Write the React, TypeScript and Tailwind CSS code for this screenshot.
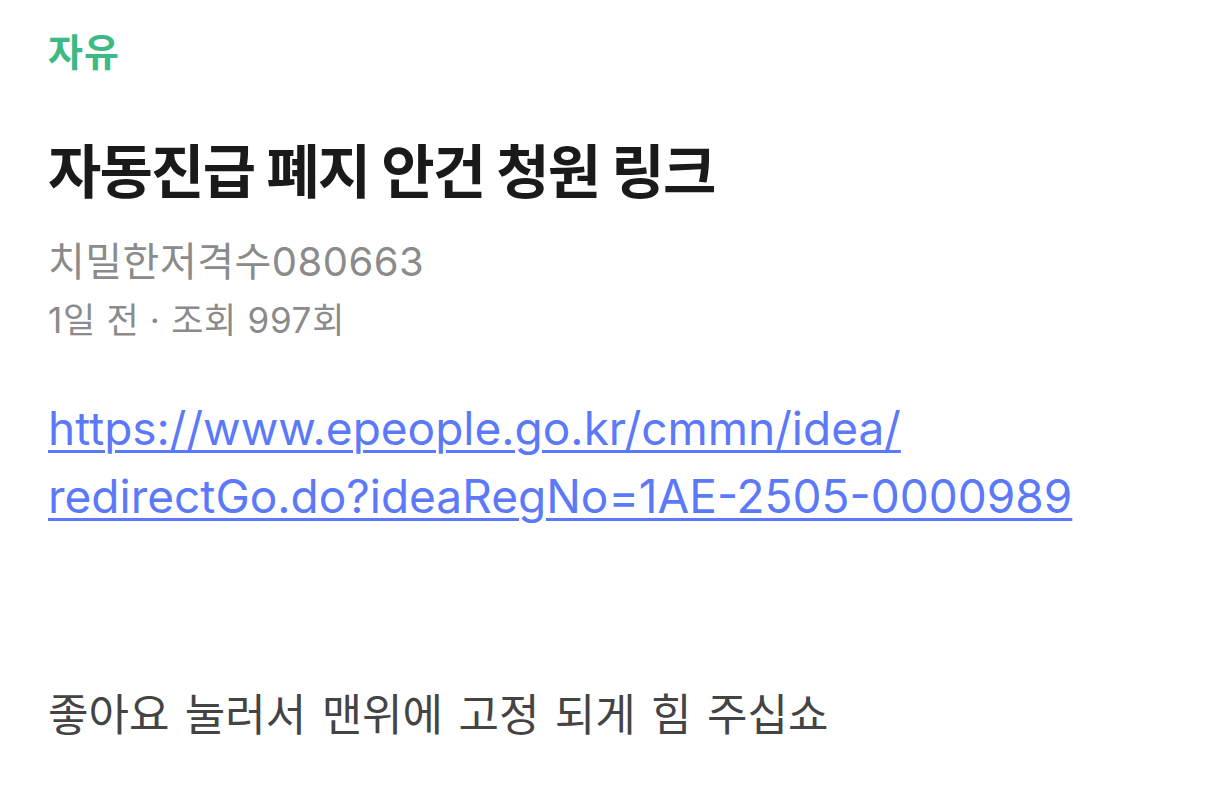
export default function App() {
  const font = { fontFamily: 'Inter, "Noto Sans CJK KR", sans-serif' };
  return (
    <div className="w-[1206px] h-[804px] bg-white overflow-hidden px-[48px]" style={font}>
      <div className="pt-[27px] text-[38px] leading-[50px] font-semibold text-[#3dba84] tracking-[1px]">자유</div>
      <h1 className="mt-[60px] text-[58px] leading-[70px] font-bold text-[#1a1a1a] tracking-[-1.8px]">자동진급 폐지 안건 청원 링크</h1>
      <div className="mt-[30px] text-[40px] leading-[50px] text-[#8b8b8b] tracking-[0.5px]">치밀한저격수080663</div>
      <div className="mt-[11px] text-[35px] leading-[44px] text-[#8b8b8b] tracking-[0.7px]">1일 전 · 조회 997회</div>
      <div className="mt-[52px] text-[46px] leading-[68px] text-[#5b79f8] w-[1100px]">
        <a href="#" className="underline decoration-[3px] underline-offset-[5px]">
          https://www.epeople.go.kr/cmmn/idea/
          <br />
          redirectGo.do?ideaRegNo=1AE-2505-0000989
        </a>
      </div>
      <div className="mt-[155px] text-[44px] leading-[60px] text-[#444444] [word-spacing:3px]">좋아요 눌러서 맨위에 고정 되게 힘 주십쇼</div>
    </div>
  );
}
